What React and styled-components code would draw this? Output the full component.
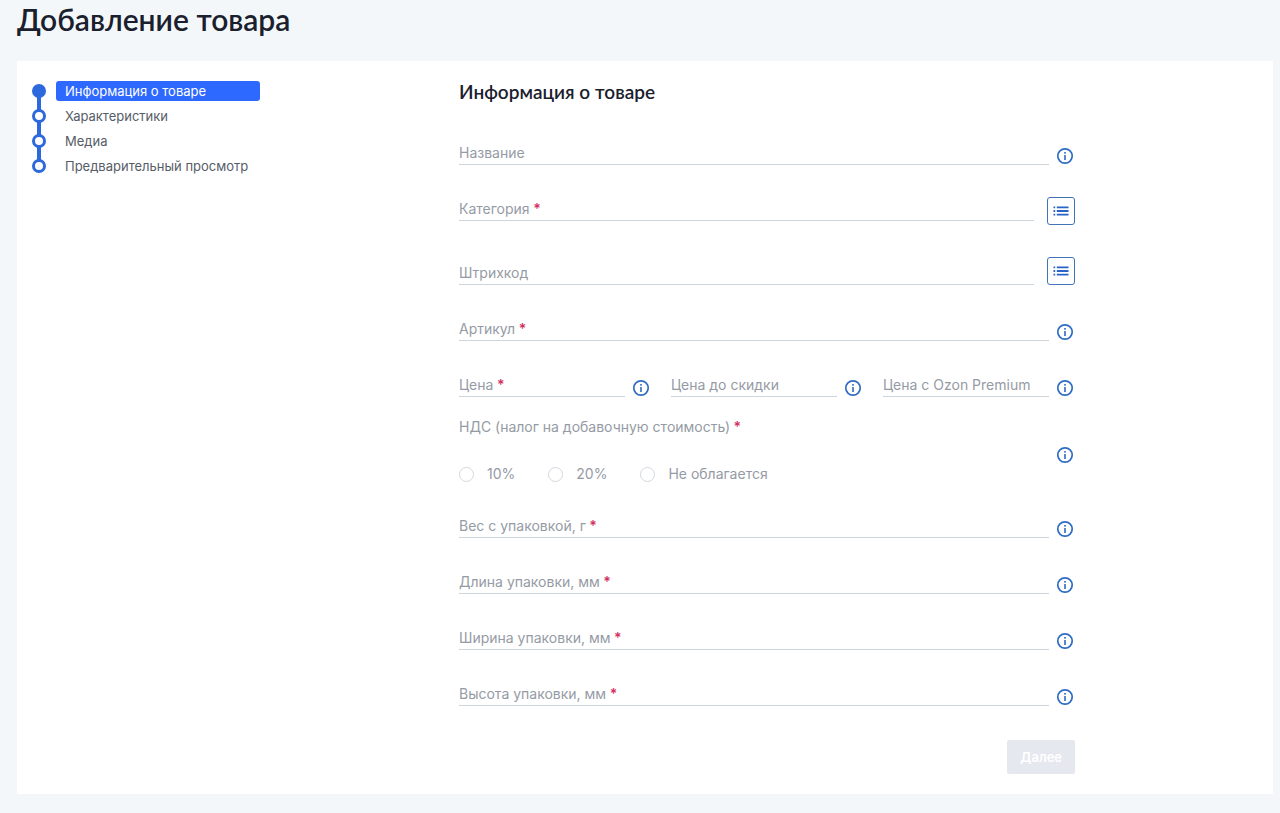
import { useState } from "react";
import styled, { createGlobalStyle } from "styled-components";

const steps = [
    "Информация о товаре",
    "Характеристики",
    "Медиа",
    "Предварительный просмотр",
];

const prices = [
    { id: "price", label: "Цена", required: true },
    { id: "oldPrice", label: "Цена до скидки" },
    { id: "premiumPrice", label: "Цена с Ozon Premium" },
];

const vatOptions = ["10%", "20%", "Не облагается"];

const sizes = [
    { id: "weight", label: "Вес с упаковкой, г" },
    { id: "length", label: "Длина упаковки, мм" },
    { id: "width", label: "Ширина упаковки, мм" },
    { id: "height", label: "Высота упаковки, мм" },
];

function InfoIcon() {
    return (
        <svg width="18" height="18" viewBox="0 0 18 18" fill="none">
            <circle cx="9" cy="9" r="7.2" stroke="currentColor" strokeWidth="1.7" />
            <rect x="8.2" y="8" width="1.6" height="5" fill="currentColor" />
            <rect x="8.2" y="5" width="1.6" height="1.7" fill="currentColor" />
        </svg>
    );
}

function ListIcon() {
    return (
        <svg width="16" height="10" viewBox="0 0 16 10" fill="currentColor">
            <path d="M0.5 0.5h1.7v1.8H0.5zM0.5 4.1h1.7v1.8H0.5zM0.5 7.7h1.7v1.8H0.5z" />
            <path d="M3.8 0.5h11.7v1.8H3.8zM3.8 4.1h11.7v1.8H3.8zM3.8 7.7h11.7v1.8H3.8z" />
        </svg>
    );
}

function Info() {
    return (
        <InfoButton type="button" aria-label="Подсказка">
            <InfoIcon />
        </InfoButton>
    );
}

function Field({ id, label, required, raised }) {
    return (
        <FieldBox $raised={raised}>
            <FieldInput id={id} name={id} type="text" placeholder=" " />
            <FieldLabel htmlFor={id}>
                {label}
                {required && <Star> *</Star>}
            </FieldLabel>
        </FieldBox>
    );
}

function ListField({ raised, ...field }) {
    return (
        <Row $gap="13px">
            <Field {...field} raised={raised} />
            <ListButton type="button" aria-label="Выбрать из списка">
                <ListIcon />
            </ListButton>
        </Row>
    );
}

function InfoField(field) {
    return (
        <Row>
            <Field {...field} />
            <Info />
        </Row>
    );
}

export default function App() {
    const [vat, setVat] = useState("");

    return (
        <Page>
            <GlobalStyle />
            <Title>Добавление товара</Title>
            <Card>
                <Sidebar>
                    <StepList>
                        {steps.map((step, i) => (
                            <Step key={step} $active={i === 0}>
                                <StepLink href="#" $active={i === 0}>
                                    {step}
                                </StepLink>
                            </Step>
                        ))}
                    </StepList>
                </Sidebar>
                <Form onSubmit={(e) => e.preventDefault()}>
                    <Subtitle>Информация о товаре</Subtitle>
                    <Fields>
                        <InfoField id="name" label="Название" />
                        <ListField id="category" label="Категория" required raised />
                        <ListField id="barcode" label="Штрихкод" />
                        <InfoField id="article" label="Артикул" required />
                        <Prices>
                            {prices.map((item) => (
                                <InfoField key={item.id} {...item} />
                            ))}
                        </Prices>
                    </Fields>
                    <Vat>
                        <VatGroup>
                            <Legend>
                                НДС (налог на добавочную стоимость)
                                <Star> *</Star>
                            </Legend>
                            <Options>
                                {vatOptions.map((item) => (
                                    <Option key={item}>
                                        <Radio
                                            type="radio"
                                            name="vat"
                                            value={item}
                                            checked={vat === item}
                                            onChange={() => setVat(item)}
                                        />
                                        {item}
                                    </Option>
                                ))}
                            </Options>
                        </VatGroup>
                        <Info />
                    </Vat>
                    <Fields>
                        {sizes.map((item) => (
                            <InfoField key={item.id} {...item} required />
                        ))}
                    </Fields>
                    <NextButton type="submit" disabled>
                        Далее
                    </NextButton>
                </Form>
            </Card>
        </Page>
    );
}

const GlobalStyle = createGlobalStyle`
    *, *::before, *::after {
        box-sizing: border-box;
    }
    body {
        margin: 0;
        background: #f3f7fa;
        color: #1a202d;
        font-family: Inter, "Liberation Sans", sans-serif;
        font-size: 14px;
    }
    button, input {
        font: inherit;
    }
`;
const Page = styled.main`
    padding: 2px 7px 19px 17px;
`;
const Title = styled.h1`
    margin: 0 0 25px;
    font-family: Lato, Inter, sans-serif;
    font-size: 30px;
    font-weight: 600;
    line-height: 34px;
`;
const Card = styled.div`
    display: flex;
    padding: 20px 15px;
    background: #fff;
`;
const Sidebar = styled.nav`
    flex: 0 0 427px;
`;
const StepList = styled.ol`
    display: flex;
    flex-direction: column;
    gap: 5px;
    width: 228px;
    margin: 0;
    padding: 0;
    list-style: none;
`;
const Step = styled.li`
    position: relative;
    display: flex;
    align-items: center;
    gap: 10px;
    &::before {
        content: "";
        width: 14px;
        height: 14px;
        border: 3px solid #2d68dd;
        border-radius: 50%;
        background: ${({ $active }) => ($active ? "#2d68dd" : "#fff")};
    }
    &:not(:last-child)::after {
        content: "";
        position: absolute;
        top: 16px;
        left: 5px;
        width: 4px;
        height: 13px;
        background: #2d68dd;
    }
`;
const StepLink = styled.a`
    flex: 1;
    padding-left: 9px;
    border-radius: 3px;
    background: ${({ $active }) => ($active ? "#2d68ff" : "transparent")};
    color: ${({ $active }) => ($active ? "#fff" : "#565d68")};
    font-size: 13px;
    line-height: 20px;
    text-decoration: none;
    white-space: nowrap;
`;
const Form = styled.form`
    display: flex;
    flex: 1;
    flex-direction: column;
    max-width: 616px;
`;
const Subtitle = styled.h2`
    margin: 0 0 38px;
    font-family: Lato, Inter, sans-serif;
    font-size: 19px;
    font-weight: 600;
    line-height: 22px;
`;
const Fields = styled.div`
    display: flex;
    flex-direction: column;
    gap: 32px;
`;
const Row = styled.div`
    display: flex;
    align-items: flex-end;
    gap: ${({ $gap }) => $gap || "6px"};
`;
const Prices = styled.div`
    display: grid;
    grid-template-columns: repeat(3, 1fr);
    gap: 20px;
`;
const FieldBox = styled.div`
    display: grid;
    flex: 1;
    min-width: 0;
    margin-bottom: ${({ $raised }) => ($raised ? "4px" : "0")};
`;
const FieldInput = styled.input`
    grid-area: 1 / 1;
    width: 100%;
    height: 24px;
    padding: 0;
    border: 0;
    border-bottom: 1px solid #cdd6dd;
    outline: 0;
    background: transparent;
    color: #1a202d;
    &:focus {
        border-color: #2d68dd;
    }
`;
const FieldLabel = styled.label`
    grid-area: 1 / 1;
    color: #959ba5;
    line-height: 24px;
    white-space: nowrap;
    cursor: text;
    input:focus + &,
    input:not(:placeholder-shown) + & {
        visibility: hidden;
    }
`;
const Star = styled.span`
    color: #d2305f;
    font-weight: 600;
`;
const InfoButton = styled.button`
    display: flex;
    flex: none;
    justify-content: center;
    width: 20px;
    padding: 0;
    border: 0;
    background: none;
    color: #2f6cc4;
    cursor: pointer;
`;
const ListButton = styled.button`
    display: flex;
    flex: none;
    align-items: center;
    justify-content: center;
    width: 28px;
    height: 28px;
    padding: 0;
    border: 1px solid #3f74b5;
    border-radius: 3px;
    background: #fff;
    color: #2a63c8;
    cursor: pointer;
`;
const Vat = styled.div`
    display: flex;
    align-items: center;
    justify-content: space-between;
    margin: 18px 0 20px;
`;
const VatGroup = styled.fieldset`
    margin: 0;
    padding: 0 0 8px;
    border: 0;
    color: #959ba5;
    line-height: 24px;
`;
const Legend = styled.legend`
    padding: 0;
`;
const Options = styled.div`
    display: flex;
    gap: 33px;
    margin-top: 23px;
`;
const Option = styled.label`
    display: flex;
    align-items: center;
    gap: 13px;
`;
const Radio = styled.input`
    width: 15px;
    height: 15px;
    margin: 0;
    appearance: none;
    border: 1px solid #d3d8de;
    border-radius: 50%;
    background: #fff;
    &:checked {
        border: 4px solid #2d68dd;
    }
`;
const NextButton = styled.button`
    align-self: flex-end;
    height: 34px;
    margin-top: 34px;
    padding: 0 13px;
    border: 0;
    border-radius: 2px;
    background: #e5e8ef;
    color: #fff;
    font-size: 13px;
    font-weight: 600;
`;
